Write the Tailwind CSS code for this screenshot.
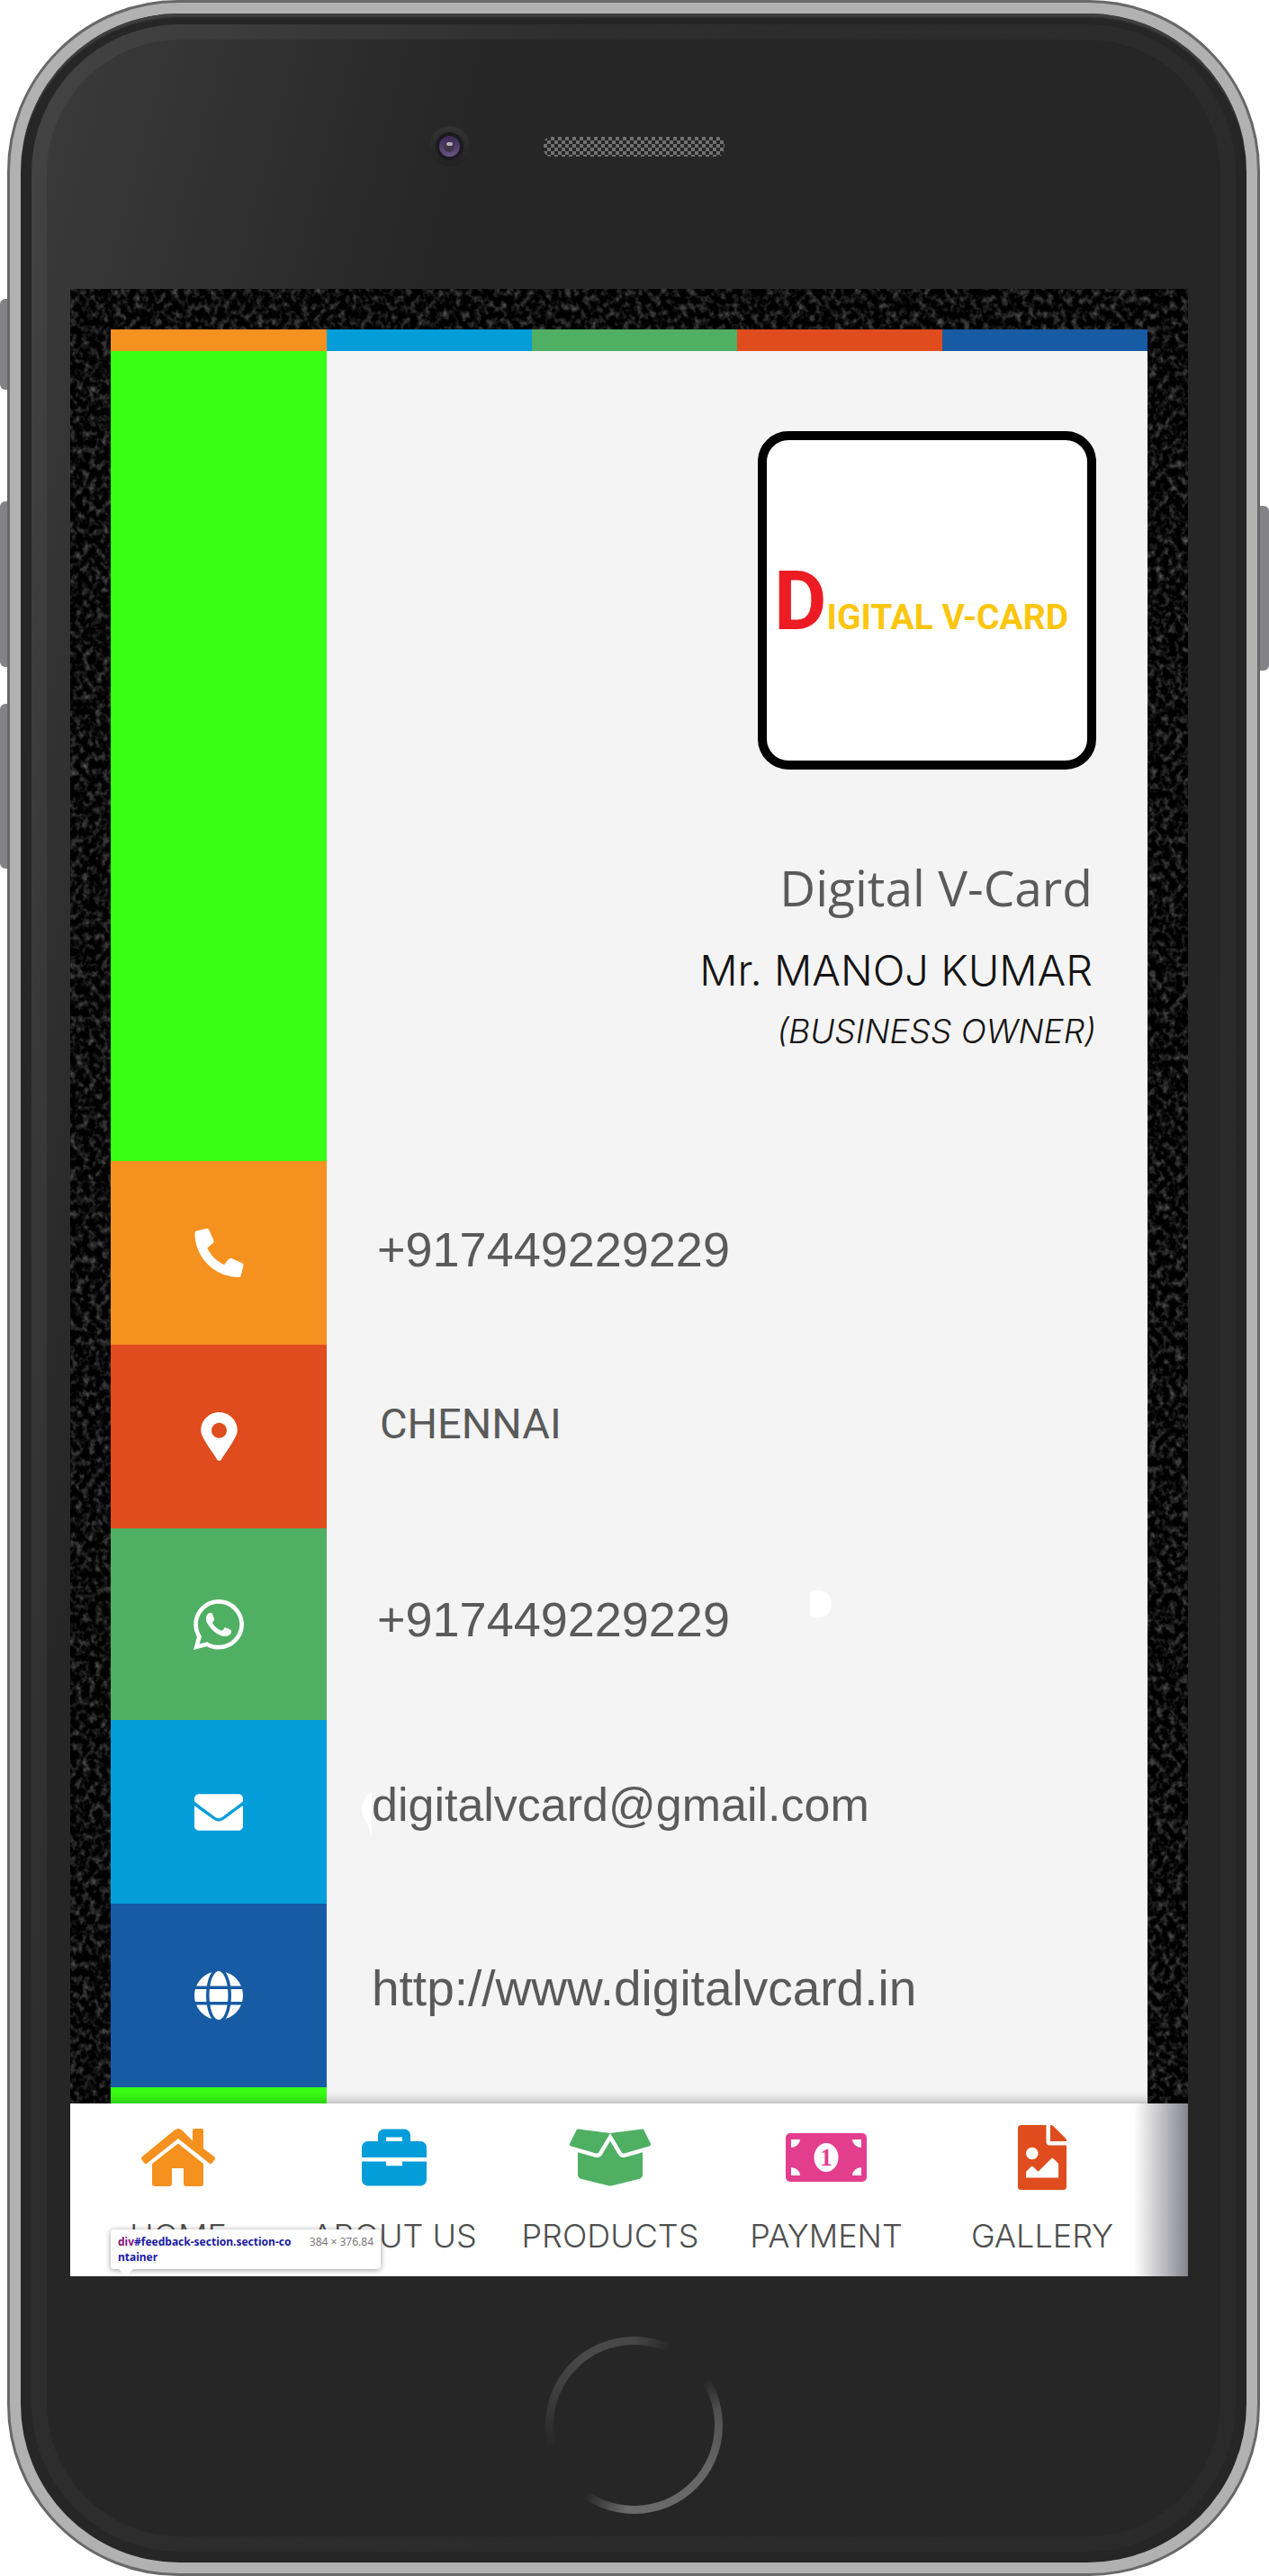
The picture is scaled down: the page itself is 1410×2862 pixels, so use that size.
<!DOCTYPE html>
<html lang="en">
<head>
<meta charset="utf-8">
<meta name="viewport" content="width=device-width, initial-scale=1">
<title>Digital V-Card</title>
<script src="https://cdn.jsdelivr.net/npm/@tailwindcss/browser@4"></script>
</head>
<body class="flex bg-white">

<!-- Left side keys -->
<div class="flex w-2 shrink-0 flex-col pt-[332px]">
  <div class="h-[101px] rounded-l-md bg-[#828287]"></div>
  <div class="mt-[124px] h-[184px] rounded-l-md bg-[#828287]"></div>
  <div class="mt-[41px] h-[183px] rounded-l-md bg-[#828287]"></div>
</div>

<!-- Phone body -->
<div class="min-w-0 flex-1 rounded-[190px] border-[3px] border-[#686868] bg-[#b1b1b1] p-3">
<div class="rounded-[176px] bg-[#262626] p-3 shadow-[inset_0_5px_2px_-1px_#3f403f]">
<div class="rounded-[165px] bg-[linear-gradient(105deg,#444444_0%,#2d2d2d_30%,#2a2a2a_100%)] p-[17px]">
<div class="rounded-[148px] bg-[linear-gradient(105deg,#3b3b3b_0%,#262626_24%)] pr-9 pl-[26px]">

  <!-- Camera and speaker -->
  <div class="-mr-[10px] grid h-[277px] grid-cols-[1fr_auto_1fr] items-center pb-10">
    <div class="flex justify-end pr-[82px]">
      <div class="flex size-[45px] items-center justify-center rounded-full bg-linear-to-b from-[#333333] to-[#222222]">
        <div class="flex size-[31px] items-center justify-center rounded-full bg-[#1b1a1f]">
          <div class="flex size-[23px] items-center justify-center rounded-full bg-linear-to-b from-[#3a2855] to-[#6a5484]">
            <div class="flex size-3 justify-center rounded-full bg-[#3d3549] pt-px"><div class="h-1 w-[7px] rounded-full bg-[#b4afba]"></div></div>
          </div>
        </div>
      </div>
    </div>
    <div class="h-[22px] w-[201px] rounded-lg bg-[repeating-conic-gradient(#262626_0%_25%,#707070_0%_50%)] bg-size-[8px_8px]"></div>
    <div></div>
  </div>

  <!-- Screen -->
  <main class="relative overflow-hidden bg-black">
    <svg class="absolute inset-0 h-full w-full" aria-hidden="true">
      <filter id="grain" x="0" y="0" width="100%" height="100%" color-interpolation-filters="sRGB">
        <feTurbulence type="fractalNoise" baseFrequency="0.14 0.12" numOctaves="3" seed="7"/>
        <feColorMatrix values="0.7 0 0 0 -0.31  0.7 0 0 0 -0.31  0.7 0 0 0 -0.305  0 0 0 0 1"/>
      </filter>
      <rect width="100%" height="100%" filter="url(#grain)"/>
    </svg>

    <div class="relative px-[45px] pt-[45px]">
      <div class="grid h-6 grid-cols-[240px_1fr_1fr_1fr_1fr]">
        <div class="bg-[#f5911e]"></div>
        <div class="bg-[#039dda]"></div>
        <div class="bg-[#4faf62]"></div>
        <div class="bg-[#e04c1d]"></div>
        <div class="bg-[#165ba4]"></div>
      </div>

      <div class="relative bg-[#f4f4f4]">
        <!-- Profile -->
        <section class="grid h-[900px] grid-cols-[240px_1fr]">
          <div class="bg-[#39ff14]"></div>
          <div class="flex flex-col items-end pt-[89px] pr-[57px]">
            <div class="flex size-[376px] items-center rounded-[34px] border-[10px] border-black bg-white pt-1 pl-2 font-['Roboto'] text-[39px] leading-none font-bold whitespace-nowrap">
              <div class="flex items-baseline"><span class="text-[90px] text-[#ed1c24]">D</span><span class="text-[#fcc60e]">IGITAL V-CARD</span></div>
            </div>
            <h1 class="mt-[91px] pr-1 font-['Open_Sans'] text-[55px] leading-20 text-[#5a5a5a]">Digital V-Card</h1>
            <h2 class="mt-3 pr-1 font-['Inter'] text-[47px] leading-20 font-light text-[#141414]">Mr. MANOJ KUMAR</h2>
            <p class="font-['Inter'] text-[37px] leading-14 font-light text-[#141414] italic">(BUSINESS OWNER)</p>
          </div>
        </section>

        <!-- Contact rows -->
        <section class="font-['Liberation_Sans'] text-[54px] leading-16 text-[#5a5a5a]">
          <div class="grid h-[204px] grid-cols-[240px_1fr]">
            <div class="flex items-center justify-center bg-[#f5911e]">
              <svg class="h-[54px] w-[55px] -scale-x-100 fill-white" viewBox="0 0 512 512" aria-hidden="true"><path d="M493.4 24.6l-104-24c-11.3-2.6-22.9 3.3-27.5 13.9l-48 112c-4.2 9.8-1.4 21.3 6.9 28l60.6 49.6c-36 76.7-98.9 140.5-177.2 177.2l-49.6-60.6c-6.8-8.3-18.2-11.1-28-6.9l-112 48C3.9 366.5-2 378.1.6 389.4l24 104C27.1 504.2 36.7 512 48 512c256.1 0 464-207.5 464-464 0-11.2-7.7-20.9-18.6-23.4z"/></svg>
            </div>
            <div class="flex items-center pb-2 pl-14"><a href="tel:+917449229229">+917449229229</a></div>
          </div>
          <div class="grid h-[204px] grid-cols-[240px_1fr]">
            <div class="flex items-center justify-center bg-[#e04c1d]">
              <svg class="h-[54px] w-[41px] fill-white" viewBox="0 0 384 512" aria-hidden="true"><path d="M172.3 501.7C130 425 0 270 0 192 0 86 86 0 192 0s192 86 192 192c0 78-130 233-172.3 309.7-9.5 13.7-29.9 13.7-39.4 0zM192 272c44.2 0 80-35.8 80-80s-35.8-80-80-80-80 35.8-80 80 35.8 80 80 80z"/></svg>
            </div>
            <div class="flex items-center pb-7 pl-[59px] font-['Roboto'] text-[47px]"><span>CHENNAI</span></div>
          </div>
          <div class="grid h-[213px] grid-cols-[240px_1fr]">
            <div class="flex items-center justify-center bg-[#4faf62]">
              <svg class="size-14 fill-white" viewBox="0 32 448 448" aria-hidden="true"><path d="M380.9 97.1C339 55.1 283.2 32 223.9 32c-122.4 0-222 99.6-222 222 0 39.1 10.2 77.3 29.6 111L0 480l117.7-30.9c32.4 17.7 68.9 27 106.1 27h.1c122.3 0 224.1-99.6 224.1-222 0-59.3-25.2-115-67.1-157zm-157 341.6c-33.2 0-65.7-8.9-94-25.7l-6.7-4-69.8 18.3L72 359.2l-4.4-7c-18.5-29.4-28.2-63.3-28.2-98.2 0-101.7 82.8-184.5 184.6-184.5 49.3 0 95.6 19.2 130.4 54.1 34.8 34.9 56.2 81.2 56.1 130.5 0 101.8-84.9 184.6-186.6 184.6zm101.2-138.2c-5.5-2.8-32.8-16.2-37.9-18-5.1-1.9-8.8-2.8-12.5 2.8-3.7 5.6-14.3 18-17.6 21.8-3.2 3.7-6.5 4.2-12 1.4-32.6-16.3-54-29.1-75.5-66-5.7-9.8 5.7-9.1 16.3-30.3 1.8-3.7.9-6.9-.5-9.7-1.4-2.8-12.5-30.1-17.1-41.2-4.5-10.8-9.1-9.3-12.5-9.5-3.2-.2-6.9-.2-10.6-.2-3.7 0-9.7 1.4-14.8 6.9-5.1 5.6-19.4 19-19.4 46.3 0 27.3 19.9 53.7 22.6 57.4 2.8 3.7 39.1 59.7 94.8 83.8 35.2 15.2 49 16.5 66.6 13.9 10.7-1.6 32.8-13.4 37.4-26.4 4.6-13 4.6-24.1 3.2-26.4-1.3-2.5-5-3.9-10.5-6.6z"/></svg>
            </div>
            <div class="flex items-center pb-3 pl-14"><a href="https://wa.me/917449229229">+917449229229</a></div>
          </div>
          <div class="grid h-[204px] grid-cols-[240px_1fr]">
            <div class="flex items-center justify-center bg-[#039dda]">
              <svg class="h-[41px] w-[54px] fill-white" viewBox="0 64 512 384" aria-hidden="true"><path d="M502.3 190.8c3.9-3.1 9.7-.2 9.7 4.7V400c0 26.500-21.500 48-48 48H48c-26.500 0-48-21.500-48-48V195.600c0-5 5.700-7.800 9.700-4.700 22.400 17.400 52.100 39.500 154.100 113.600 21.100 15.400 56.700 47.800 92.200 47.600 35.700.3 72-32.800 92.300-47.600 102-74.100 131.600-96.300 154-113.700zM256 320c23.200.4 56.600-29.200 73.400-41.400 132.700-96.300 142.800-104.700 173.400-128.700 5.800-4.500 9.200-11.500 9.200-18.900v-19c0-26.500-21.500-48-48-48H48c-26.500 0-48 21.500-48 48v19c0 7.400 3.400 14.300 9.200 18.900 30.600 23.900 40.700 32.400 173.400 128.700 16.800 12.200 50.200 41.800 73.400 41.400z"/></svg>
            </div>
            <div class="flex items-center pb-4 pl-[50px] text-[52px]"><a href="mailto:digitalvcard@gmail.com">digitalvcard@gmail.com</a></div>
          </div>
          <div class="grid h-[204px] grid-cols-[240px_1fr]">
            <div class="flex items-center justify-center bg-[#165ba4]">
              <svg class="size-[54px] fill-white" viewBox="0 8 496 496" aria-hidden="true"><path d="M336.5 160C322 70.7 287.8 8 248 8s-74 62.7-88.5 152h177zM152 256c0 22.2 1.2 43.5 3.3 64h185.3c2.1-20.5 3.3-41.8 3.3-64s-1.2-43.5-3.3-64H155.3c-2.1 20.5-3.3 41.8-3.3 64zm324.7-96c-28.6-67.9-86.5-120.4-158-141.6 24.4 33.8 41.2 84.7 50 141.6h108zM177.2 18.4C105.8 39.6 47.8 92.1 19.3 160h108c8.7-56.9 25.500-107.800 49.900-141.600zM487.400 192H372.700c2.100 21 3.300 42.500 3.300 64s-1.200 43-3.300 64h114.600c5.500-20.500 8.600-41.800 8.600-64s-3.100-43.500-8.500-64zM120 256c0-21.500 1.200-43 3.300-64H8.600C3.200 212.500 0 233.800 0 256s3.200 43.500 8.600 64h114.600c-2-21-3.200-42.500-3.200-64zm39.500 96c14.500 89.300 48.700 152 88.500 152s74-62.700 88.500-152h-177zm159.300 141.600c71.400-21.200 129.400-73.700 158-141.600h-108c-8.800 56.900-25.600 107.800-50 141.600zM19.300 352c28.600 67.900 86.500 120.400 158 141.600-24.400-33.800-41.200-84.700-50-141.600h-108z"/></svg>
            </div>
            <div class="flex items-center pb-4 pl-[50px] text-[55px]"><a href="http://www.digitalvcard.in">http://www.digitalvcard.in</a></div>
          </div>
          <div class="h-[18px] w-[240px] bg-[#39ff14]"></div>
        </section>

        <!-- Loose white specks over the card -->
        <svg class="absolute top-[1376px] left-[777px] h-8 w-[26px] fill-white" viewBox="0 0 26 32" aria-hidden="true"><path d="M0 3a15.500 15.500 0 1 1 0 26z"/></svg>
        <svg class="absolute top-[1601px] left-[279px] h-[51px] w-3 fill-white" viewBox="0 0 12 51" aria-hidden="true"><path d="M11 0C3 4 0 12 0 20c0 9 8 14 11 31z"/></svg>
      </div>
    </div>

    <!-- Bottom navigation -->
    <nav class="relative flex h-48 bg-white pt-6 pr-[42px] shadow-[0_-2px_12px_rgba(0,0,0,0.3)] font-['Inter'] text-[36px] leading-12 font-light whitespace-nowrap text-[#4f4f4f]">
      <a href="#home" class="flex min-w-0 flex-1 flex-col items-center gap-[27px]">
        <span class="flex h-[72px] items-center"><svg class="h-16 w-[82px] fill-[#f5911e]" viewBox="0 0 82 64" aria-hidden="true"><path d="M37 1.500Q41-1.500 45 1.500L57 13.500V2Q57 0 59 0H67Q69 0 69 2V22L81 31Q83 33 81 35L79 38Q77 40 75 38L41 11 7 38Q5 40 3 38L1 35Q-1 33 1 31Z"/><path d="M41 16.500 69 39V61Q69 64 66 64H50Q47 64 47 61V44H34V61Q34 64 31 64H15Q12 64 12 61V39Z"/></svg></span>
        <span>HOME</span>
      </a>
      <a href="#about" class="flex min-w-0 flex-1 flex-col items-center gap-[27px]">
        <span class="flex h-[72px] items-center"><svg class="size-[72px] fill-[#039dda]" viewBox="0 0 512 512" aria-hidden="true"><path d="M320 322H192v-34H0v144c0 25.600 22.400 48 48 48h416c25.600 0 48-22.400 48-48V288H320zM464 128h-80V80c0-25.600-22.400-48-48-48H176c-25.600 0-48 22.400-48 48v48H48c-25.600 0-48 22.400-48 48v80h512v-80c0-25.600-22.400-48-48-48zm-144 0H192V96h128v32z"/></svg></span>
        <span>ABOUT US</span>
      </a>
      <a href="#products" class="flex min-w-0 flex-1 flex-col items-center gap-[27px]">
        <span class="flex h-[72px] items-center"><svg class="h-[72px] w-[90px] fill-[#4faf62]" viewBox="0 0 640 512" aria-hidden="true"><path d="M425.700 256c-16.900 0-32.800-9-41.400-23.400L320 126l-64.200 106.600c-8.700 14.500-24.600 23.500-41.500 23.500-4.500 0-9-.6-13.300-1.900L64 215v178c0 14.700 10 27.500 24.200 31l216.200 54.100c10.200 2.500 20.900 2.500 31 0L551.800 424c14.200-3.600 24.200-16.400 24.200-31V215l-137 39.100c-4.300 1.300-8.800 1.900-13.300 1.900zm212.600-112.200L586.800 41c-3.100-6.200-9.800-9.800-16.700-8.900L320 64l91.700 152.100c3.800 6.300 11.400 9.300 18.500 7.300l197.900-56.500c9.900-2.900 14.700-13.900 10.200-23.100zM53.200 41L1.700 143.800c-4.600 9.200.3 20.200 10.100 23l197.900 56.500c7.100 2 14.700-1 18.500-7.300L320 64 69.800 32.100c-6.900-.8-13.500 2.700-16.600 8.900z"/></svg></span>
        <span>PRODUCTS</span>
      </a>
      <a href="#payment" class="flex min-w-0 flex-1 flex-col items-center gap-[27px]">
        <span class="flex h-[72px] items-center"><svg class="h-[54px] w-[90px]" viewBox="0 0 90 54" aria-hidden="true"><rect width="90" height="54" rx="5" fill="#e33e8e"/><path fill="#fff" d="M6 7h10a10 9 0 0 1-10 9zM84 7H74a10 9 0 0 0 10 9zM6 47h10A10 9 0 0 0 6 38zM84 47H74a10 9 0 0 1 10-9z"/><ellipse cx="45" cy="27" rx="13.500" ry="16" fill="#fff"/><text x="45" y="36" text-anchor="middle" font-family="Liberation Serif, serif" font-weight="700" font-size="27" fill="#e33e8e">1</text></svg></span>
        <span>PAYMENT</span>
      </a>
      <a href="#gallery" class="flex min-w-0 flex-1 flex-col items-center gap-[27px]">
        <span class="flex h-[72px] items-center"><svg class="h-[72px] w-[54px] fill-[#e04c1d]" viewBox="0 0 384 512" aria-hidden="true"><path d="M384 121.900V128H256V0h6.100a24 24 0 0 1 16.900 7l98 98a24 24 0 0 1 7 16.900zM248 160c-13.200 0-24-10.800-24-24V0H24C10.700 0 0 10.700 0 24v464c0 13.300 10.700 24 24 24h336c13.300 0 24-10.700 24-24V160H248zm-135.500 16c26.500 0 48 21.500 48 48s-21.500 48-48 48-48-21.500-48-48 21.500-48 48-48zm208 240h-256l.5-48.500L104.500 328c4.700-4.700 11.800-4.200 16.500.5l39.500 39.500L264 264.500c4.700-4.700 12.300-4.700 17 0l39.500 39.500v112z"/></svg></span>
        <span>GALLERY</span>
      </a>
      <div class="absolute inset-y-0 right-0 w-[60px] bg-linear-to-r from-transparent to-[#84848e]"></div>

      <!-- Inspector tooltip -->
      <div class="absolute bottom-2 left-[45px] flex w-[300px] gap-4 rounded-sm bg-white px-2 py-[5px] font-['Noto_Sans'] text-[12px] leading-[17px] shadow-[0_1px_6px_rgba(0,0,0,0.4)]">
        <div class="font-bold text-[#1a1aa6]"><span class="text-[#881280]">div</span>#feedback-section.section-co<br>ntainer</div>
        <div class="ml-auto font-normal text-[#777777]">384 × 376.84</div>
        <svg class="absolute top-full left-[9px] h-2 w-4 fill-white" viewBox="0 0 16 8" aria-hidden="true"><path d="M0 0h16L8 8z"/></svg>
      </div>
    </nav>
  </main>

  <!-- Home button -->
  <div class="-mr-[10px] flex h-[289px] justify-center pt-[67px]">
    <button type="button" aria-label="Home" class="size-[197px] rounded-full bg-[conic-gradient(#474747_0deg,#262626_25deg,#262626_58deg,#505050_80deg,#666666_120deg,#6a6a6a_185deg,#262626_215deg,#262626_255deg,#3c3c3c_290deg,#4a4a4a_325deg,#474747_360deg)] p-[9px]">
      <span class="block size-full rounded-full bg-[#262626]"></span>
    </button>
  </div>

</div>
</div>
</div>
</div>

<!-- Right side key -->
<div class="w-[10px] shrink-0 pt-[562px]">
  <div class="h-[183px] rounded-r-md bg-[#828287]"></div>
</div>

</body>
</html>
